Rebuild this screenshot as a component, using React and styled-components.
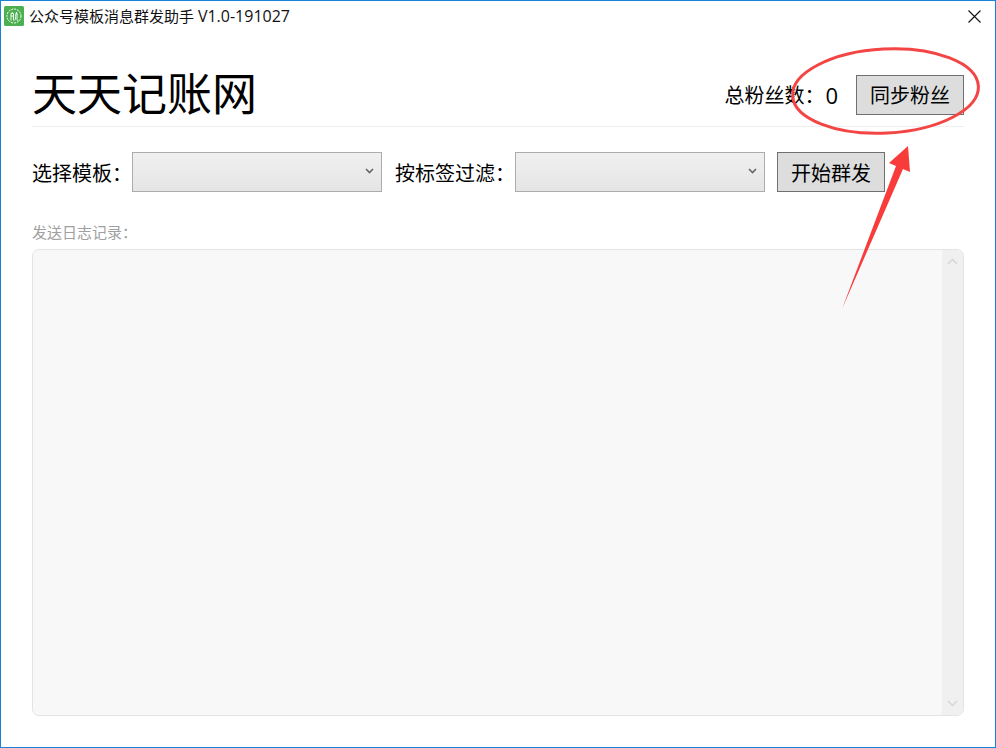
import React from "react";
import styled, { createGlobalStyle } from "styled-components";

const Global = createGlobalStyle`
  html, body { margin: 0; padding: 0; background: #fff; }
  body { font-family: "Open Sans", "Noto Sans CJK SC", sans-serif; color: #000; }
`;

const Window = styled.div`
  position: relative;
  box-sizing: border-box;
  width: 996px;
  height: 748px;
  border: 1px solid #1883d7;
  background: #fff;
  display: flex;
  flex-direction: column;
  overflow: hidden;
`;

const TitleBar = styled.div`
  height: 30px;
  flex: none;
  display: flex;
  align-items: center;
  padding: 0 14px 0 3px;
  gap: 5px;
`;

const AppIcon = styled.svg`
  width: 20px;
  height: 20px;
  flex: none;
`;

const TitleText = styled.div`
  font-size: 15px;
  line-height: 20px;
  white-space: nowrap;
  flex: 1;
  color: #111;
`;

const Version = styled.span`
  font-size: 16px;
`;

const CloseIcon = styled.svg`
  width: 13px;
  height: 13px;
  flex: none;
`;

const Content = styled.div`
  flex: 1;
  display: flex;
  flex-direction: column;
  padding: 0 31px 31px;
  min-height: 0;
`;

const Header = styled.header`
  height: 96px;
  flex: none;
  box-sizing: border-box;
  border-bottom: 1px solid #eeeeee;
  display: flex;
  align-items: center;
  justify-content: space-between;
  padding-top: 36px;
  padding-bottom: 3px;
`;

const Brand = styled.h1`
  margin: 0 0 2px;
  font-size: 45px;
  font-weight: 400;
  line-height: 56px;
  white-space: nowrap;
`;

const Stats = styled.div`
  display: flex;
  align-items: center;
`;

const Label = styled.span`
  font-size: 20px;
  line-height: 28px;
  white-space: nowrap;
  padding-top: ${(p) => p.$drop}px;
`;

const StatValue = styled.span`
  font-size: 22px;
  line-height: 28px;
  margin-left: 1px;
  margin-right: 18px;
`;

const Button = styled.button`
  box-sizing: border-box;
  width: 108px;
  height: 40px;
  padding: ${(p) => p.$drop}px 0 0;
  border: 1px solid #707070;
  background: #dddddd;
  color: #000;
  font-family: inherit;
  font-size: 20px;
  line-height: 28px;
  white-space: nowrap;
`;

const Toolbar = styled.div`
  flex: none;
  display: flex;
  align-items: center;
  margin-top: 25px;
  height: 40px;
`;

const SelectBox = styled.div`
  box-sizing: border-box;
  width: 250px;
  height: 40px;
  margin-right: ${(p) => p.$after}px;
  border: 1px solid #acacac;
  background: linear-gradient(#f0f0f0, #e5e5e5);
  display: flex;
  align-items: center;
  justify-content: flex-end;
  padding: 0 7px 2px 0;
`;

const Chevron = styled.svg`
  width: ${(p) => p.$w || 9}px;
  height: ${(p) => p.$h || 6}px;
  flex: none;
`;

const LogLabel = styled.div`
  flex: none;
  margin-top: 29px;
  font-size: 15px;
  line-height: 22px;
  color: #a0a0a0;
`;

const LogBox = styled.div`
  flex: 1;
  margin-top: 6px;
  min-height: 0;
  box-sizing: border-box;
  border: 1px solid #e4e4e4;
  border-radius: 7px;
  background: #f8f8f8;
  display: flex;
  justify-content: flex-end;
  overflow: hidden;
`;

const ScrollTrack = styled.div`
  width: 21px;
  background: #f0f0f0;
  display: flex;
  flex-direction: column;
  align-items: center;
  justify-content: space-between;
  padding: 8px 0;
`;

const Annotation = styled.svg`
  position: absolute;
  left: -1px;
  top: -1px;
  width: 996px;
  height: 748px;
  pointer-events: none;
`;

function Down() {
  return (
    <Chevron viewBox="0 0 9 6">
      <path d="M1 1l3.5 3.5L8 1" fill="none" stroke="#666" strokeWidth="1.6" />
    </Chevron>
  );
}

export default function App() {
  return (
    <>
      <Global />
      <Window>
        <TitleBar>
          <AppIcon viewBox="0 0 20 20">
            <rect width="20" height="20" rx="1.5" fill="#4caf50" />
            <circle cx="10" cy="10" r="7" fill="none" stroke="#fff" strokeWidth="1" strokeDasharray="2 1" />
            <path d="M7 14.5V7.5h2.5v7M7 10h2.5M8 6l.7 1.5M11 8h3M12.5 6v2M11.7 8.5c0 3-.2 4.5-.9 6M13 8.5v5c0 .8.4 1 1.2 1" fill="none" stroke="#fff" strokeWidth=".9" />
          </AppIcon>
          <TitleText>公众号模板消息群发助手 <Version>V1.0-191027</Version></TitleText>
          <CloseIcon viewBox="0 0 13 13">
            <path d="M.5.5l12 12M12.5.5l-12 12" stroke="#111" strokeWidth="1.1" fill="none" />
          </CloseIcon>
        </TitleBar>
        <Content>
          <Header>
            <Brand>天天记账网</Brand>
            <Stats>
              <Label $drop={2}>总粉丝数：</Label>
              <StatValue>0</StatValue>
              <Button $drop={2}>同步粉丝</Button>
            </Stats>
          </Header>
          <Toolbar>
            <Label $drop={4}>选择模板：</Label>
            <SelectBox $after={13}>
              <Down />
            </SelectBox>
            <Label $drop={4}>按标签过滤：</Label>
            <SelectBox $after={12}>
              <Down />
            </SelectBox>
            <Button $drop={4}>开始群发</Button>
          </Toolbar>
          <LogLabel>发送日志记录：</LogLabel>
          <LogBox>
            <ScrollTrack>
              <Chevron $w={11} $h={7} viewBox="0 0 11 7">
                <path d="M1 6l4.5-4.5L10 6" fill="none" stroke="#d8d8d8" strokeWidth="1.6" />
              </Chevron>
              <Chevron $w={11} $h={7} viewBox="0 0 11 7">
                <path d="M1 1l4.5 4.5L10 1" fill="none" stroke="#d8d8d8" strokeWidth="1.6" />
              </Chevron>
            </ScrollTrack>
          </LogBox>
        </Content>
        <Annotation viewBox="0 0 996 748">
          <ellipse cx="885.5" cy="91" rx="93" ry="42" fill="none" stroke="#f44545" strokeWidth="3" transform="rotate(-3 885.5 91)" />
          <polygon points="842,309 896,166 889,163 908,146 910,172 903,169" fill="#f83c3c" />
        </Annotation>
      </Window>
    </>
  );
}
